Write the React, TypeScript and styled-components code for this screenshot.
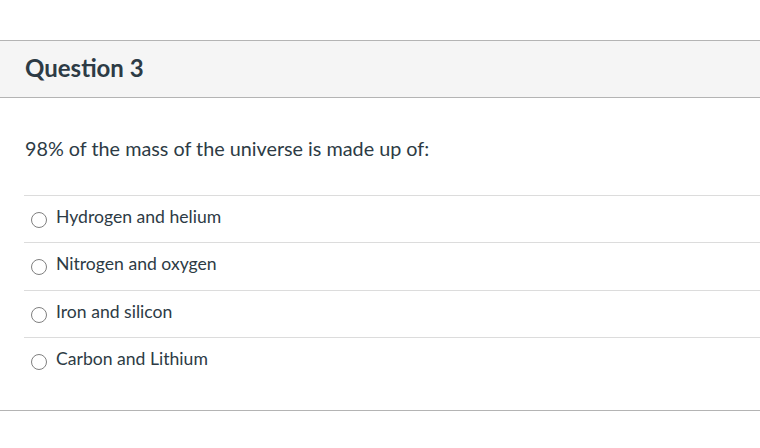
import React from "react";
import styled, { createGlobalStyle } from "styled-components";

const Global = createGlobalStyle`
  html, body { margin: 0; padding: 0; background: #ffffff; }
  body { font-family: Lato, "Open Sans", Arial, sans-serif; color: #2d3b45; }
`;

const Page = styled.div`
  padding-top: 40px;
  width: 760px;
`;

const Card = styled.section`
  border-bottom: 1px solid #b4b4b4;
`;

const Header = styled.header`
  display: flex;
  align-items: center;
  box-sizing: border-box;
  height: 58px;
  padding: 0 25px 3px;
  background: #f5f5f5;
  border-top: 1px solid #b4b4b4;
  border-bottom: 1px solid #b4b4b4;
`;

const Title = styled.h2`
  margin: 0;
  font-size: 24px;
  line-height: 28px;
  font-weight: 700;
  color: #2d3b45;
`;

const Body = styled.div`
  padding: 38px 0 25px 24px;
`;

const Prompt = styled.p`
  margin: 0 0 35px 1px;
  font-size: 19.8px;
  line-height: 24px;
  color: #2d3b45;
`;

const Answers = styled.div`
  display: flex;
  flex-direction: column;
`;

const Answer = styled.label`
  display: flex;
  align-items: center;
  gap: 9px;
  height: 47px;
  padding: 0 0 5px 7px;
  border-top: 1px solid #dcdcdc;
  font-size: 17.6px;
  color: #2d3b45;
  box-sizing: border-box;
  &:nth-child(n + 2) { height: 47.5px; }
`;

const Radio = styled.span`
  width: 14px;
  height: 14px;
  border-radius: 50%;
  border: 1px solid #808080;
  background: #fff;
  flex: none;
  margin-top: 7px;
`;

const options = [
  "Hydrogen and helium",
  "Nitrogen and oxygen",
  "Iron and silicon",
  "Carbon and Lithium",
];

export default function App() {
  return (
    <>
      <Global />
      <Page>
        <Card>
          <Header>
            <Title>Question 3</Title>
          </Header>
          <Body>
            <Prompt>98% of the mass of the universe is made up of:</Prompt>
            <Answers>
              {options.map((o) => (
                <Answer key={o}>
                  <Radio />
                  {o}
                </Answer>
              ))}
            </Answers>
          </Body>
        </Card>
      </Page>
    </>
  );
}
